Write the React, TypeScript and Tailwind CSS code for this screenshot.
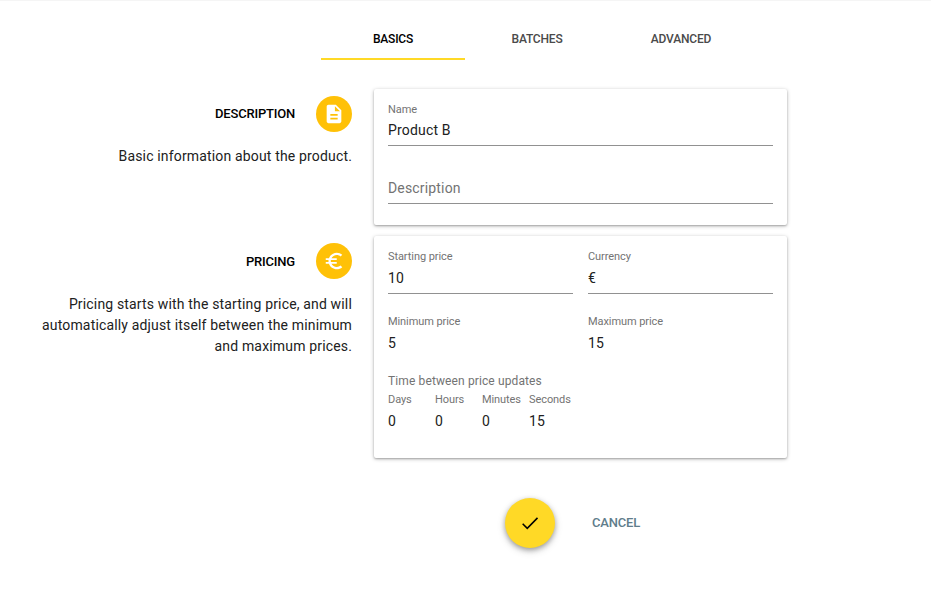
import type { ReactNode } from "react";

const TABS = ["BASICS", "BATCHES", "ADVANCED"];

function Tab({ label, active }: { label: string; active: boolean }) {
  return (
    <button
      type="button"
      className={
        "flex h-12 w-36 items-center justify-center border-b-2 pt-2 text-[12px] font-medium tracking-[-0.2px] " +
        (active ? "border-[#ffd926] text-black" : "border-transparent text-[#4a4a4a]")
      }
    >
      {label}
    </button>
  );
}

function Badge({ children }: { children: ReactNode }) {
  return (
    <span className="flex size-9 items-center justify-center rounded-full bg-[#ffc107]">
      <svg viewBox="0 0 24 24" className="size-[22px] fill-white">
        {children}
      </svg>
    </span>
  );
}

type SectionProps = { title: string; icon: ReactNode; text: string; lower?: boolean; children: ReactNode };

function Section({ title, icon, text, lower, children }: SectionProps) {
  return (
    <section className="flex gap-[22px]">
      <div className="w-[352px] pl-8 pt-[7px] text-right">
        <div className="flex items-center justify-end gap-[21px]">
          <h2 className={"text-[13px] font-medium tracking-[-0.2px] text-black " + (lower ? "pt-0.5" : "")}>{title}</h2>
          <Badge>{icon}</Badge>
        </div>
        <p
          className={
            "text-[14px] leading-[21px] tracking-[0.16px] text-[#212121] " + (lower ? "mt-[15px]" : "mt-3.5")
          }
        >
          {text}
        </p>
      </div>
      <div className="w-[413px] rounded-[2px] bg-white px-3.5 shadow-[0_1px_4px_rgba(0,0,0,0.22),0_1px_2px_rgba(0,0,0,0.24)]">
        {children}
      </div>
    </section>
  );
}

type FieldProps = { label: string; value: string; line?: boolean; tight?: boolean };

function Field({ label, value, line, tight }: FieldProps) {
  return (
    <div className={"h-[45px] border-b " + (line ? "border-[#919191] " : "border-transparent ") + (tight ? "pt-px" : "")}>
      <div className="h-4 whitespace-nowrap text-[11px] leading-4 tracking-[-0.08px] text-[#737373]">{label}</div>
      <div
        className={
          "h-5 text-[14px] leading-[22px] tracking-[0.17px] text-[#212121] " + (tight ? "mt-px" : "mt-0.5")
        }
      >
        {value}
      </div>
    </div>
  );
}

export default function App() {
  return (
    <main className="h-[609px] w-[931px] overflow-hidden border-t border-[#f5f5f5] bg-white font-[Roboto,sans-serif]">
      <nav className="flex pl-[321px] pt-[11px]">
        {TABS.map((tab) => (
          <Tab key={tab} label={tab} active={tab === "BASICS"} />
        ))}
      </nav>

      <div className="mt-[29px] flex flex-col gap-[11px]">
        <Section
          title="DESCRIPTION"
          text="Basic information about the product."
          icon={
            <path d="M14 2H6c-1.1 0-1.99.9-1.99 2L4 20c0 1.1.89 2 1.99 2H18c1.1 0 2-.9 2-2V8l-6-6zm2 16H8v-2h8v2zm0-4H8v-2h8v2zm-3-5V3.5L18.5 9H13z" />
          }
        >
          <div className="h-[136px] pt-3">
            <Field label="Name" value="Product B" line tight />
            <div className="mt-[13px] h-[45px] border-b border-[#919191] pt-[18px] text-[14px] leading-[22px] tracking-[0.17px] text-[#737373]">
              Description
            </div>
          </div>
        </Section>

        <Section
          title="PRICING"
          lower
          text="Pricing starts with the starting price, and will automatically adjust itself between the minimum and maximum prices."
          icon={
            <path d="M15 18.5c-2.51 0-4.68-1.42-5.76-3.5H15v-2H8.58c-.05-.33-.08-.66-.08-1s.03-.67.08-1H15V9H9.24C10.32 6.92 12.5 5.5 15 5.5c1.61 0 3.09.59 4.23 1.57L21 5.3C19.41 3.87 17.3 3 15 3c-3.92 0-7.24 2.51-8.48 6H3v2h3.06c-.04.33-.06.66-.06 1s.02.67.06 1H3v2h3.52c1.24 3.49 4.56 6 8.48 6 2.31 0 4.41-.87 6-2.3l-1.78-1.77c-1.13.98-2.6 1.57-4.22 1.57z" />
          }
        >
          <div className="h-[222px] pt-[13px]">
            <div className="grid grid-cols-2 gap-x-[15px] gap-y-5">
              <Field label="Starting price" value="10" line />
              <Field label="Currency" value="€" line />
              <Field label="Minimum price" value="5" />
              <Field label="Maximum price" value="15" />
            </div>
            <div className="mt-3.5 h-[19px] text-[12px] leading-4 tracking-[0.12px] text-[#737373]">
              Time between price updates
            </div>
            <div className="grid grid-cols-[repeat(4,47px)]">
              <Field label="Days" value="0" />
              <Field label="Hours" value="0" />
              <Field label="Minutes" value="0" />
              <Field label="Seconds" value="15" />
            </div>
          </div>
        </Section>
      </div>

      <div className="mt-10 flex items-center gap-[37px] pl-[505px]">
        <button
          type="button"
          aria-label="Save"
          className="flex size-[50px] items-center justify-center rounded-full bg-[#ffd926] shadow-[0_2px_5px_rgba(0,0,0,0.3),0_3px_8px_rgba(0,0,0,0.16)]"
        >
          <svg viewBox="0 0 24 24" className="size-[22px] fill-none stroke-black stroke-[1.7]">
            <path d="M4 12.8L9 17.8L20.2 6.4" />
          </svg>
        </button>
        <button type="button" className="text-[13px] font-medium tracking-[-0.2px] text-[#607d8b]">
          CANCEL
        </button>
      </div>
    </main>
  );
}
